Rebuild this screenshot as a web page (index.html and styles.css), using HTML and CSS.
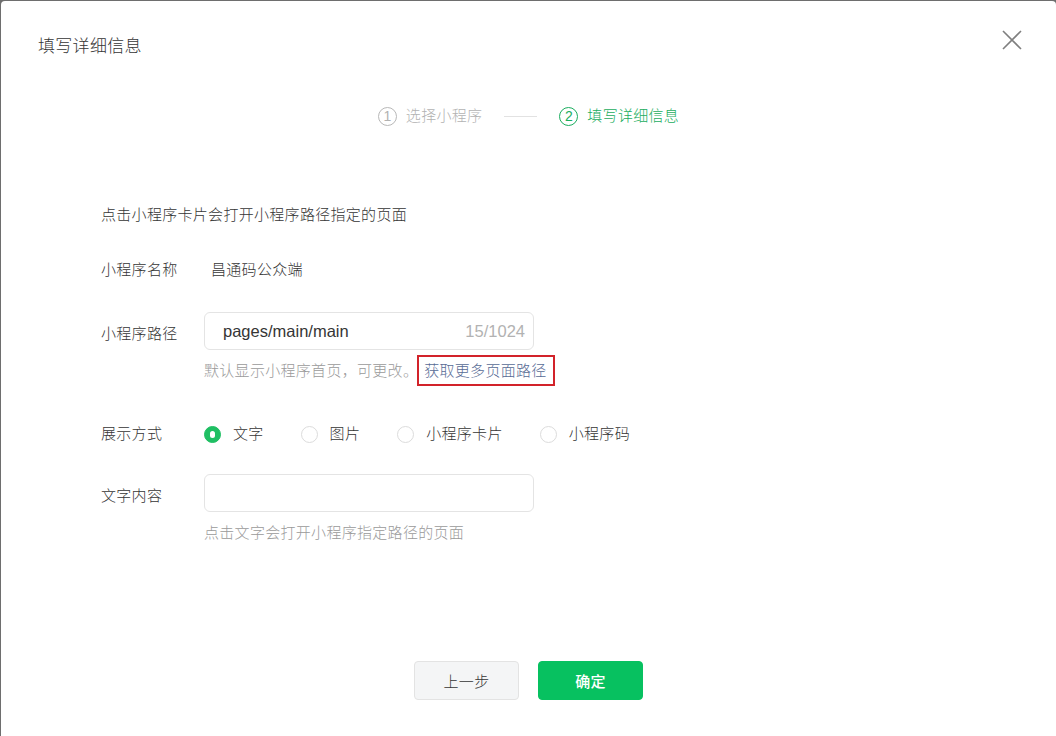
FILE: index.html
```html
<!DOCTYPE html>
<html lang="zh-CN">
<head>
<meta charset="utf-8">
<title>填写详细信息</title>
<link rel="stylesheet" href="styles.css">
</head>
<body>
<div class="dialog">
  <div class="header">
    <div class="title">填写详细信息</div>
    <svg class="close" width="20" height="20" viewBox="0 0 20 20"><path d="M1 1 L19 19 M19 1 L1 19" stroke="#7f7f7f" stroke-width="1.6" fill="none"/></svg>
  </div>
  <div class="steps">
    <div class="step">
      <span class="num">1</span><span>选择小程序</span>
    </div>
    <div class="step-line"></div>
    <div class="step active">
      <span class="num">2</span><span>填写详细信息</span>
    </div>
  </div>
  <div class="form">
    <div class="intro">点击小程序卡片会打开小程序路径指定的页面</div>
    <div class="row row-name">
      <div class="label">小程序名称</div>
      <div class="value">昌通码公众端</div>
    </div>
    <div class="row row-path">
      <div class="label label-input">小程序路径</div>
      <div class="control">
        <div class="input">
          <span class="input-text">pages/main/main</span>
          <span class="counter">15/1024</span>
        </div>
        <div class="hint hint-path">
          <span>默认显示小程序首页，可更改。</span>
          <span class="link-box">获取更多页面路径</span>
        </div>
      </div>
    </div>
    <div class="row row-radio">
      <div class="label">展示方式</div>
      <div class="radios">
        <div class="radio-item"><span class="radio checked"><span class="dot"></span></span><span>文字</span></div>
        <div class="radio-item"><span class="radio"></span><span>图片</span></div>
        <div class="radio-item"><span class="radio"></span><span>小程序卡片</span></div>
        <div class="radio-item"><span class="radio"></span><span>小程序码</span></div>
      </div>
    </div>
    <div class="row row-text">
      <div class="label label-input">文字内容</div>
      <div class="control">
        <div class="input"></div>
        <div class="hint hint-text">点击文字会打开小程序指定路径的页面</div>
      </div>
    </div>
  </div>
  <div class="footer">
    <button class="btn btn-default">上一步</button>
    <button class="btn btn-primary">确定</button>
  </div>
</div>
</body>
</html>
```
FILE: styles.css
```css
html, body {
  margin: 0;
  padding: 0;
}
body {
  background: #6e6e6e;
  width: 1056px;
  height: 736px;
  overflow: hidden;
  font-family: "Liberation Sans", "Noto Sans CJK SC", sans-serif;
  font-size: 15px;
  font-weight: 300;
  letter-spacing: 0.3px;
  color: #353535;
}
.dialog {
  margin: 1px 0 0 1px;
  width: 1055px;
  height: 740px;
  background: #fff;
  border-radius: 4px;
  box-sizing: border-box;
}
.header {
  display: flex;
  justify-content: space-between;
  align-items: flex-start;
  padding: 29px 34px 0 37px;
}
.title {
  margin-top: 6px;
  font-size: 17px;
  line-height: 22px;
  color: #353535;
}
.close {
  display: block;
}
.steps {
  margin-top: 47px;
  display: flex;
  justify-content: center;
  align-items: center;
  height: 22px;
  line-height: 22px;
}
.step {
  display: flex;
  align-items: center;
  gap: 9px;
  color: #b2b2b2;
}
.step .num {
  width: 17px;
  height: 17px;
  border: 1px solid #b8b8b8;
  border-radius: 50%;
  font-size: 14px;
  line-height: 17px;
  text-align: center;
  letter-spacing: 0;
  color: #b2b2b2;
}
.step.active {
  color: #1aad5e;
}
.step.active .num {
  border-color: #1aad5e;
  color: #1aad5e;
}
.step-line {
  width: 33px;
  height: 1px;
  background: #e2e2e2;
  margin: 0 22px;
}
.form {
  padding-left: 100px;
  margin-top: 77px;
}
.intro {
  line-height: 22px;
}
.row {
  display: flex;
  align-items: flex-start;
  line-height: 22px;
}
.label {
  width: 103px;
  flex: none;
}
.label-input {
  padding-top: 11px;
}
.value {
  color: #353535;
  padding-left: 7px;
}
.row-name {
  margin-top: 33px;
}
.row-path {
  margin-top: 31px;
}
.control {
  display: flex;
  flex-direction: column;
}
.input {
  width: 330px;
  height: 38px;
  box-sizing: border-box;
  border: 1px solid #e4e4e4;
  border-radius: 6px;
  display: flex;
  align-items: center;
  justify-content: space-between;
  padding: 0 8px 0 18px;
  letter-spacing: 0;
}
.input-text {
  font-size: 16.5px;
  font-weight: 400;
  color: #353535;
}
.counter {
  font-size: 16.5px;
  font-weight: 400;
  color: #b2b2b2;
}
.hint {
  color: #9a9a9a;
}
.hint-path {
  display: flex;
  align-items: center;
  margin-top: 5px;
  height: 31px;
}
.link-box {
  margin-left: -1px;
  border: 2px solid #d2232a;
  padding: 0 6px 0 5px;
  height: 27px;
  line-height: 27px;
  color: #576b95;
}
.row-radio {
  margin-top: 37px;
}
.radios {
  display: flex;
  align-items: center;
  gap: 37px;
  height: 22px;
}
.radio-item {
  display: flex;
  align-items: center;
  gap: 12px;
}
.radio {
  width: 17px;
  height: 17px;
  box-sizing: border-box;
  border: 1px solid #dcdcdc;
  border-radius: 50%;
  display: flex;
  align-items: center;
  justify-content: center;
}
.radio.checked {
  background: #1fbf63;
  border-color: #1fbf63;
}
.radio .dot {
  width: 5px;
  height: 7px;
  border-radius: 3px;
  background: #fff;
}
.row-text {
  margin-top: 29px;
}
.hint-text {
  margin-top: 10px;
}
.footer {
  margin-top: 117px;
  display: flex;
  justify-content: center;
  gap: 19px;
}
.btn {
  width: 105px;
  height: 39px;
  box-sizing: border-box;
  border-radius: 4px;
  font-family: "Liberation Sans", "Noto Sans CJK SC", sans-serif;
  font-size: 15px;
  letter-spacing: 0.3px;
  cursor: pointer;
}
.btn-default {
  background: #f4f5f6;
  border: 1px solid #e3e3e3;
  color: #353535;
  font-weight: 300;
}
.btn-primary {
  background: #07c160;
  border: 1px solid #07c160;
  color: #fff;
  font-weight: 500;
}
```
